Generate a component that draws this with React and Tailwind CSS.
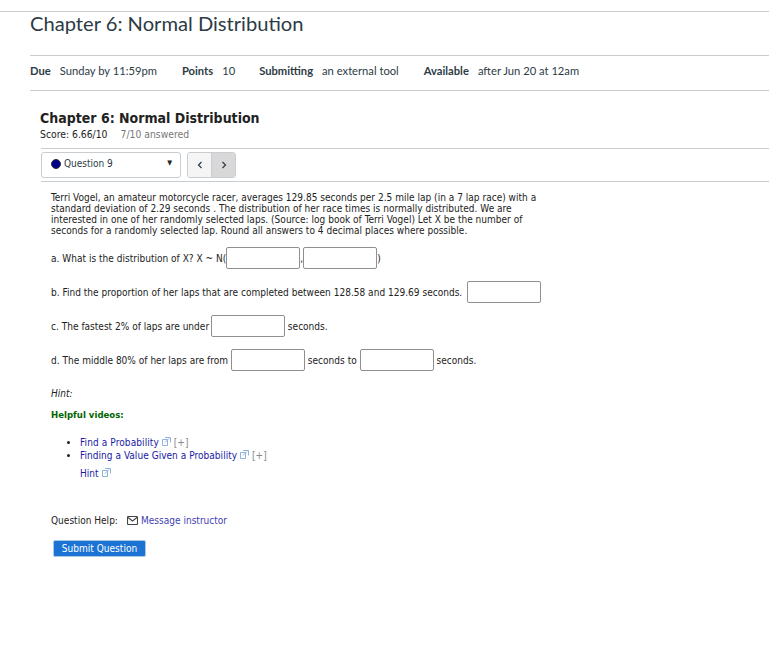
import React from 'react'

const body = "font-['DejaVu_Sans_Condensed','DejaVu_Sans',sans-serif] text-[10px] leading-[11px] tracking-[0.02px] text-[#222]"

const Box = ({ className = '' }) => (
  <span className={`inline-block w-[74px] h-[22px] align-middle rounded-[2px] border border-[#8f8f8f] bg-white ${className}`}></span>
)

const ExtIcon = () => (
  <svg className="inline-block ml-[3px] mb-[3px] align-middle" width="9" height="9" viewBox="0 0 9 9" fill="none" stroke="#8fb4dc" strokeWidth="1">
    <path d="M0.5 2.5h5v6h-5z" />
    <path d="M3 0.5h5.5v5" />
    <path d="M3 5.5l4-4" />
  </svg>
)

const Row = ({ className = '', children }) => (
  <div className={`flex items-center h-[22px] whitespace-pre ${className}`}>{children}</div>
)

const App = () => {
  return (
    <div className="min-h-[655px] w-full bg-white overflow-hidden pt-[11px] font-['Lato',sans-serif]">
      <div className="border-t border-[#c7cdd1]">
        <h1 className="pl-[30px] text-[20.15px] leading-[23px] text-[#2d3b45]">Chapter 6: Normal Distribution</h1>
      </div>

      <div className="ml-[30px] mt-[20px] h-[36px] pb-[3px] border-y border-[#c7cdd1] flex items-center text-[11.2px] text-[#2d3b45]">
        <span className="font-bold">Due</span>
        <span className="ml-[9px]">Sunday by 11:59pm</span>
        <span className="font-bold ml-[25px]">Points</span>
        <span className="ml-[9px]">10</span>
        <span className="font-bold ml-[24px]">Submitting</span>
        <span className="ml-[9px]">an external tool</span>
        <span className="font-bold ml-[25px]">Available</span>
        <span className="ml-[9px]">after Jun 20 at 12am</span>
      </div>

      <div className="ml-[41px] mt-[18px] font-['DejaVu_Sans_Condensed','DejaVu_Sans',sans-serif]">
        <h2 className="-ml-[1px] text-[14px] leading-[18px] font-bold text-[#222]">Chapter 6: Normal Distribution</h2>
        <div className="-ml-[1px] text-[10.3px] leading-[13px] mt-[1px] text-[#222]">
          Score: 6.66/10<span className="ml-[13px] text-[#777]">7/10 answered</span>
        </div>

        <div className="mt-[7px] h-[34px] border-y border-[#c7cdd1] flex items-center">
          <div className="w-[140px] h-[26px] rounded-[3px] border border-[#c7cdd1] flex items-center pl-[9px] pr-[8px]">
            <span className="w-[10px] h-[10px] mb-[3px] rounded-full bg-[#00008b] border border-[#333]"></span>
            <span className="ml-[3px] mb-[3px] text-[10px] text-[#2d3b45]">Question 9</span>
            <span className="ml-auto mb-[3px] text-[7px] text-[#222]">▼</span>
          </div>
          <div className="ml-[6px] w-[49px] h-[26px] rounded-[3px] border border-[#c7cdd1] flex overflow-hidden text-[#2d3b45]">
            <span className="w-[24px] bg-[#f5f5f5] border-r border-[#c7cdd1] flex items-center justify-center">
              <svg width="6" height="8" viewBox="0 0 6 8" fill="none" stroke="#2d3b45" strokeWidth="1.2"><path d="M4.5 1L1.5 4l3 3" /></svg>
            </span>
            <span className="flex-1 bg-[#d8d8d8] flex items-center justify-center">
              <svg width="6" height="8" viewBox="0 0 6 8" fill="none" stroke="#2d3b45" strokeWidth="1.2"><path d="M1.5 1l3 3-3 3" /></svg>
            </span>
          </div>
        </div>
      </div>

      <div className={`ml-[51px] mt-[10px] ${body}`}>
        <p className="w-[490px]">
          Terri Vogel, an amateur motorcycle racer, averages 129.85 seconds per 2.5 mile lap (in a 7 lap race) with a standard deviation of 2.29 seconds . The distribution of her race times is normally distributed. We are interested in one of her randomly selected laps. (Source: log book of Terri Vogel) Let X be the number of seconds for a randomly selected lap. Round all answers to 4 decimal places where possible.
        </p>

        <Row className="mt-[11px]">a. What is the distribution of X? X ~ N(<Box />,<Box />)</Row>
        <Row className="mt-[12px]">b. Find the proportion of her laps that are completed between 128.58 and 129.69 seconds. <Box className="ml-[2px]" /></Row>
        <Row className="mt-[12px]">c. The fastest 2% of laps are under <Box className="-ml-[1px]" /> seconds.</Row>
        <Row className="mt-[12px]">d. The middle 80% of her laps are from <Box /> seconds to <Box /> seconds.</Row>

        <p className="mt-[17px] italic">Hint:</p>
        <p className="mt-[10px] font-bold text-[9.5px] text-[#006400]">Helpful videos:</p>

        <ul className="mt-[16px] ml-[19px] list-disc pl-[10px] leading-[13px]">
          <li><span className="tracking-[0.1px] text-[#1a1aa6]">Find a Probability</span><ExtIcon /> <span className="text-[#888]">[+]</span></li>
          <li><span className="tracking-[0.04px] text-[#1a1aa6]">Finding a Value Given a Probability</span><ExtIcon /> <span className="text-[#888]">[+]</span></li>
        </ul>
        <p className="ml-[29px] mt-[5px] leading-[13px] text-[#1a1aa6]">Hint<ExtIcon /></p>

        <div className="mt-[35px] flex items-center">
          <span>Question Help:</span>
          <svg className="ml-[9px]" width="11" height="9" viewBox="0 0 11 9" fill="none" stroke="#444" strokeWidth="1.1">
            <rect x="0.5" y="0.5" width="10" height="8" rx="1" />
            <path d="M1 1.5l4.5 3.5L10 1.5" />
          </svg>
          <span className="ml-[3px] text-[#3f3fb5]">Message instructor</span>
        </div>

        <button className="mt-[14px] ml-[2px] w-[93px] h-[17px] rounded-[2px] bg-[#1b74d4] border border-[#a9c8e8] text-white text-[10px] leading-[14px]">Submit Question</button>
      </div>
    </div>
  )
}

export default App
